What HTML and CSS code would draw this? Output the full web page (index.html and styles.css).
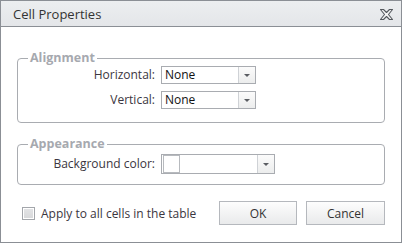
FILE: index.html
```html
<!DOCTYPE html>
<html>
<head>
<meta charset="utf-8">
<link rel="stylesheet" href="styles.css">
</head>
<body>
<div class="dialog">
  <div class="titlebar">
    <span class="title">Cell Properties</span>
    <svg class="close" width="13" height="11" viewBox="0 0 13 11">
      <polygon points="0.5,0.5 3.5,0.5 6.5,3.5 9.5,0.5 12.5,0.5 8.5,5.5 12.5,10.5 9.5,10.5 6.5,7.5 3.5,10.5 0.5,10.5 4.5,5.5" fill="#f4f4f4" stroke="#55595e" stroke-width="1.1" stroke-linejoin="round"/>
    </svg>
  </div>
  <div class="content">
    <fieldset class="group group-align">
      <legend>Alignment</legend>
      <div class="form">
        <label class="lbl">Horizontal:</label>
        <div class="select"><span class="val">None</span><span class="btn"><i class="arrow"></i></span></div>
        <label class="lbl">Vertical:</label>
        <div class="select"><span class="val">None</span><span class="btn"><i class="arrow"></i></span></div>
      </div>
    </fieldset>
    <fieldset class="group group-app">
      <legend>Appearance</legend>
      <div class="form">
        <label class="lbl">Background color:</label>
        <div class="select color"><span class="swatch"></span><span class="btn"><i class="arrow"></i></span></div>
      </div>
    </fieldset>
    <div class="footer">
      <label class="check"><span class="box"><span class="inner"></span></span>Apply to all cells in the table</label>
      <div class="buttons">
        <button class="button ok">OK</button>
        <button class="button cancel">Cancel</button>
      </div>
    </div>
  </div>
</div>
</body>
</html>
```

FILE: styles.css
```css
* { box-sizing: border-box; }
html, body { margin: 0; padding: 0; background: #fff; }
body { font-family: "Open Sans", "Noto Sans", sans-serif; font-size: 12px; color: #333; }

.dialog {
  width: 402px;
  height: 243px;
  border: 1px solid #8b8f95;
  display: flex;
  flex-direction: column;
  background: #fff;
}

.titlebar {
  height: 26px;
  flex: none;
  background: linear-gradient(#eceef0, #e4e6e9);
  border-bottom: 1px solid #8b8f95;
  display: flex;
  align-items: center;
  justify-content: space-between;
  padding: 0 8px 0 12px;
}
.title { font-size: 13px; color: #333; line-height: 16px; }
.close { display: block; margin-top: 1px; }

.content {
  padding: 24px 16px 0 16px;
  display: flex;
  flex-direction: column;
}

.group {
  margin: 0;
  border: 1px solid #a9acb1;
  border-radius: 4px;
  padding: 1px 0 13px 0;
  min-width: 0;
}
.group legend {
  font-weight: bold;
  color: #a6a9af;
  font-size: 12.5px;
  line-height: 14px;
  padding: 0 2px;
  margin-left: 10px;
}
.group-app { margin-top: 14px; padding: 3px 0 10px 0; }

.form {
  display: grid;
  grid-template-columns: 137px auto;
  column-gap: 6px;
  row-gap: 7px;
  align-items: center;
  justify-items: start;
}
.lbl { justify-self: end; color: #3b3640; line-height: 18px; }

.select {
  width: 95px;
  height: 18px;
  border: 1px solid #a9acb1;
  display: flex;
  align-items: stretch;
  background: #fff;
}
.select .val { flex: 1; padding-left: 3px; color: #111; line-height: 16px; }
.select .btn {
  width: 17px;
  flex: none;
  border-left: 1px solid #cfd2d6;
  background: linear-gradient(#fbfbfb, #eceded);
  display: flex;
  align-items: center;
  justify-content: center;
}
.arrow {
  width: 0; height: 0;
  border-left: 3px solid transparent;
  border-right: 3px solid transparent;
  border-top: 3px solid #5a5d62;
}
.select.color { width: 114px; height: 20px; }
.select.color .swatch {
  width: 17px;
  height: 18px;
  margin: 0 0 0 1px;
  border: 1px solid #b7babe;
  align-self: center;
}
.select.color .swatch + .btn { margin-left: auto; }

.footer {
  margin-top: 16px;
  display: flex;
  align-items: center;
  justify-content: space-between;
}
.check {
  display: flex;
  align-items: center;
  gap: 6px;
  padding-left: 5px;
  color: #3b3640;
  font-size: 12px;
}
.box {
  width: 13px; height: 13px;
  border: 1px solid #a3a6ab;
  background: #fff;
  padding: 1px;
  display: block;
}
.inner { display: block; width: 100%; height: 100%; background: linear-gradient(#e2e3e5, #d8d9db); }

.buttons { display: flex; gap: 9px; }
.button {
  height: 24px;
  width: 78px;
  border: 1px solid #b5b8bd;
  background: linear-gradient(#fdfdfd, #e9eaeb);
  font-family: inherit;
  font-size: 12px;
  color: #333;
  padding: 0;
  margin: 0;
}
.button.cancel { width: 79px; }
```
